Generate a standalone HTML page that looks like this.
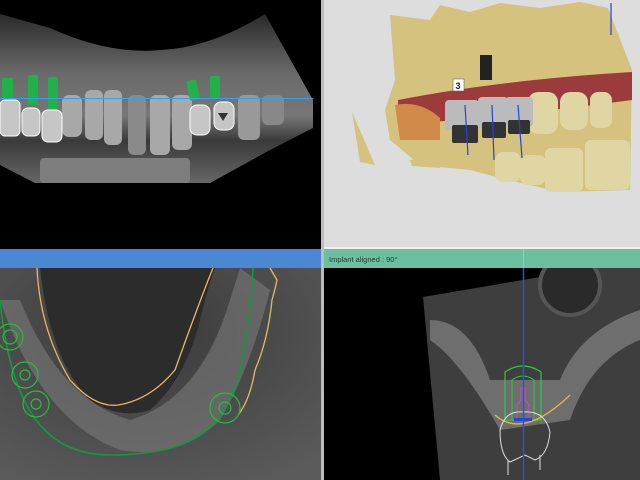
<!DOCTYPE html>
<html><head><style>html,body{margin:0;padding:0;background:#000;width:640px;height:480px;overflow:hidden}</style></head><body>
<svg width="640" height="480" viewBox="0 0 640 480" xmlns="http://www.w3.org/2000/svg" style="display:block">
<defs>
<linearGradient id="xr" x1="0" y1="0" x2="0" y2="1"><stop offset="0" stop-color="#2a2a2a"/><stop offset="0.35" stop-color="#6a6a6a"/><stop offset="0.6" stop-color="#777"/><stop offset="0.75" stop-color="#3a3a3a"/><stop offset="1" stop-color="#666"/></linearGradient>
<radialGradient id="ct" cx="0.45" cy="0.3" r="0.8"><stop offset="0" stop-color="#3a3a3a"/><stop offset="1" stop-color="#5a5a5a"/></radialGradient>
</defs>
<rect width="640" height="480" fill="#000"/>
<path d="M0 14 L50 28 Q110 55 160 50 Q210 48 265 14 L313 100 L313 128 L270 150 L210 183 L35 183 L0 165 Z" fill="url(#xr)"/>
<g fill="#a8a8a8">
<rect x="62" y="95" width="20" height="42" rx="7"/><rect x="85" y="90" width="18" height="50" rx="6"/>
<rect x="104" y="90" width="18" height="55" rx="6"/><rect x="128" y="95" width="18" height="60" rx="6" fill="#8a8a8a"/>
<rect x="150" y="95" width="20" height="60" rx="6"/><rect x="172" y="95" width="20" height="55" rx="6"/>
<rect x="238" y="95" width="22" height="45" rx="6" fill="#999"/><rect x="262" y="95" width="22" height="30" rx="6" fill="#888"/>
</g>
<g fill="#c6c6c6" stroke="#fff" stroke-width="1">
<rect x="0" y="100" width="20" height="36" rx="5"/><rect x="22" y="108" width="18" height="28" rx="6"/><rect x="42" y="110" width="20" height="32" rx="6"/>
<rect x="190" y="105" width="20" height="30" rx="7"/><rect x="214" y="102" width="20" height="28" rx="7"/>
</g>
<path d="M218 113 l10 0 l-5 8z" fill="#333"/>
<g fill="#7d7d7d"><rect x="40" y="158" width="150" height="25" rx="4"/></g>
<g fill="#22b04a"><rect x="2" y="78" width="11" height="20" rx="2"/><rect x="28" y="75" width="10" height="30" rx="2"/><rect x="48" y="77" width="10" height="32" rx="2"/><rect x="188" y="80" width="10" height="20" rx="2" transform="rotate(-12 193 90)"/><rect x="210" y="76" width="10" height="22" rx="2"/></g>
<line x1="0" y1="98.5" x2="313" y2="98.5" stroke="#3aa0e8" stroke-width="1"/>
<rect x="321" y="0" width="3" height="480" fill="#bdbdbd"/>
<rect x="324" y="0" width="316" height="248" fill="#dcdddc"/>
<path d="M390 15 L430 20 L440 5 L470 12 L500 3 L540 8 L580 2 L608 8 L632 70 L630 190 L560 192 L500 178 L470 170 L420 165 L390 140 L385 110 L395 80 Z" fill="#d5c27e"/>
<path d="M352 112 L360 162 L375 165 Z" fill="#d5c27e"/>
<path d="M410 160 L440 155 L440 168 L412 166Z" fill="#d5c27e"/>
<path d="M398 100 Q500 80 632 72 L632 100 Q520 115 398 125 Z" fill="#9c3b3b"/>
<path d="M395 105 Q420 100 440 118 L440 140 L400 140 Z" fill="#d08a4a"/>
<g fill="#e0d6a4"><rect x="528" y="92" width="30" height="42" rx="10"/><rect x="560" y="92" width="28" height="38" rx="10"/><rect x="590" y="92" width="22" height="36" rx="8"/><rect x="585" y="140" width="45" height="50" rx="6"/><rect x="545" y="148" width="38" height="44" rx="6"/><rect x="520" y="155" width="26" height="30" rx="8"/><rect x="495" y="152" width="26" height="30" rx="8"/></g>
<g fill="#bbb"><rect x="445" y="100" width="34" height="30" rx="4"/><rect x="478" y="97" width="30" height="32" rx="4"/><rect x="505" y="97" width="28" height="30" rx="4"/></g>
<g fill="#333"><rect x="452" y="125" width="26" height="18" rx="2"/><rect x="482" y="122" width="24" height="16" rx="2"/><rect x="508" y="120" width="22" height="14" rx="2"/><rect x="480" y="55" width="12" height="25" fill="#222"/></g>
<g stroke="#2244dd" stroke-width="1.2"><line x1="465" y1="105" x2="468" y2="155"/><line x1="492" y1="105" x2="494" y2="160"/><line x1="518" y1="105" x2="522" y2="158"/><line x1="611" y1="3" x2="611" y2="35"/></g>
<rect x="453" y="79" width="11" height="12" fill="#fff" stroke="#555" stroke-width="0.5"/>
<text x="455.5" y="89" font-family="Liberation Sans,sans-serif" font-size="9" font-weight="bold" fill="#222">3</text>
<rect x="324" y="247" width="316" height="2" fill="#eee"/>
<rect x="0" y="268" width="321" height="212" fill="url(#ct)"/>
<path d="M40 268 Q50 360 90 400 Q120 420 150 410 Q185 380 200 320 Q210 280 215 268 Z" fill="#2c2c2c"/>
<path d="M0 300 Q40 420 120 450 Q180 460 220 420 Q250 370 270 290 L240 268 L230 300 Q200 400 130 420 Q60 400 20 300Z" fill="#7a7a7a" opacity="0.6"/>
<path d="M37 268 Q40 330 70 380 Q95 408 118 405 Q150 400 175 370 Q200 300 213 268" fill="none" stroke="#e8b860" stroke-width="1.3"/>
<path d="M270 268 L277 280 Q275 290 272 300 Q268 340 255 370 Q250 400 238 415" fill="none" stroke="#e8b860" stroke-width="1.3"/>
<path d="M0 300 C10 400 40 455 110 455 C190 455 225 430 240 370 C250 320 252 290 253 268" fill="none" stroke="#109a40" stroke-width="1.6"/>
<g fill="none" stroke="#22c03a" stroke-width="1.2"><circle cx="10" cy="337" r="13"/><circle cx="10" cy="337" r="7"/><circle cx="25" cy="375" r="13"/><circle cx="25" cy="375" r="5"/><circle cx="36" cy="404" r="13"/><circle cx="36" cy="404" r="5"/><circle cx="225" cy="408" r="15"/><circle cx="225" cy="408" r="6"/></g>
<rect x="0" y="249" width="321" height="19" fill="#4a88d4"/>
<rect x="324" y="268" width="316" height="212" fill="#000"/>
<path d="M423 297 L640 260 L640 480 L440 480 Z" fill="#3e3e3e"/>
<circle cx="570" cy="285" r="30" fill="#2a2a2a" stroke="#555" stroke-width="4"/>
<path d="M430 320 Q470 320 490 380 L560 380 Q580 330 640 310 L640 340 Q590 360 570 420 L500 430 Q460 360 430 340Z" fill="#7a7a7a" opacity="0.8"/>
<path d="M505 420 L505 372 Q523 360 541 372 L541 420 Z" fill="none" stroke="#22d040" stroke-width="1.2"/>
<path d="M512 420 L512 380 Q523 372 534 380 L534 420 Z" fill="none" stroke="#22d040" stroke-width="1"/>
<path d="M517 420 L517 405 L521 400 L521 388 L525 388 L525 400 L529 405 L529 420Z" fill="none" stroke="#e040e0" stroke-width="0.8"/>
<path d="M495 415 Q523 440 570 395" fill="none" stroke="#e8b040" stroke-width="1.4"/>
<path d="M500 430 Q505 410 523 412 Q545 410 550 432 Q548 455 535 460 L525 455 L510 462 Q500 455 500 430Z M508 460 L508 475 M540 455 L540 470" fill="none" stroke="#ddd" stroke-width="1"/>
<rect x="514" y="418" width="18" height="3" fill="#2244dd"/>
<line x1="523.5" y1="268" x2="523.5" y2="480" stroke="#2255dd" stroke-width="1.5"/>
<rect x="324" y="249" width="316" height="19" fill="#6cc0a0"/>
<line x1="523.5" y1="249" x2="523.5" y2="268" stroke="#8cc8f0" stroke-width="1"/>
<text x="329" y="262" font-family="Liberation Sans,sans-serif" font-size="7.5" fill="#1e3a30">Implant aligned : 90°</text>
</svg>
</body></html>
